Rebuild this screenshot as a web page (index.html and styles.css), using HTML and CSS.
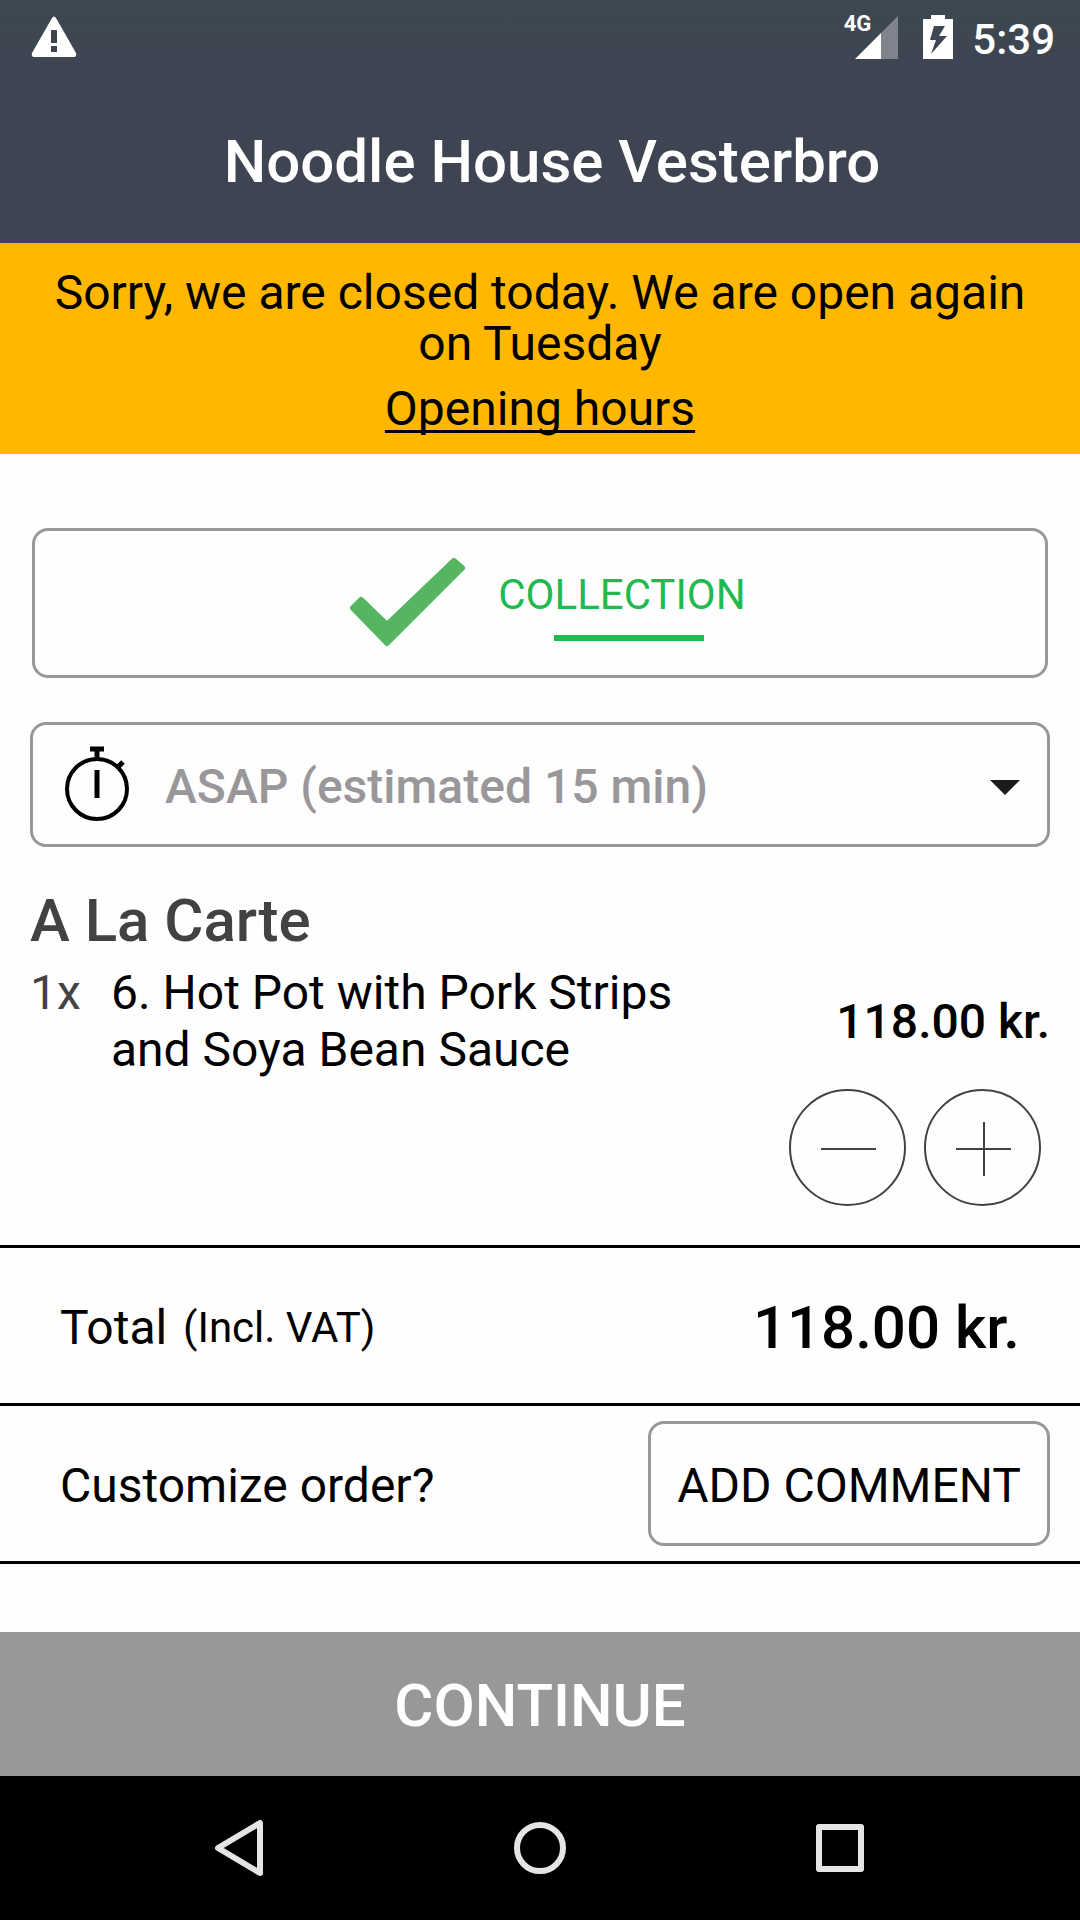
FILE: index.html
```
<!DOCTYPE html>
<html lang="en">
<head>
  <meta charset="UTF-8" />
  <meta name="viewport" content="width=device-width, initial-scale=1.0"/>
  <title>Noodle House Vesterbro</title>
  <link rel="stylesheet" href="styles.css">
</head>
<body>
  <div class="statusbar">
    <svg class="warning" width="46" height="42" viewBox="0 0 46 42" aria-hidden="true">
      <path fill="#fff" fill-rule="evenodd" d="M21 2q2-3 4 0L45 37q1 4-2 4H3q-3 0-2-4zM20 14v13h6V14zM20 30v6h6v-6z"/>
    </svg>
    <div class="status-right">
      <span class="network">4G</span>
      <svg class="signal" width="43" height="43" viewBox="0 0 43 43" aria-hidden="true">
        <path fill="#fff" d="M0 43L26 17V43z"/>
        <path fill="#7f838d" d="M26 17L43 0V43H26z"/>
      </svg>
      <svg class="battery" width="30" height="44" viewBox="0 0 30 44" aria-hidden="true">
        <path fill="#fff" fill-rule="evenodd" d="M8 0H22V4H30V44H0V4H8zM11 11L7 25H13L8 39L24 21H16L22 11z"/>
      </svg>
      <span class="clock">5:39</span>
    </div>
  </div>
  <header>
    <h1>Noodle House Vesterbro</h1>
  </header>
  <div class="notice">
    <p>Sorry, we are closed today. We are open again on Tuesday</p>
    <a href="#">Opening hours</a>
  </div>
  <main>
    <button class="collection" type="button">
      <svg width="145" height="90" viewBox="0 0 145 90" aria-hidden="true">
        <path fill="#56b560" stroke="#56b560" stroke-width="6" stroke-linejoin="round" d="M33 50L41 42L67 67L134 3L142 10L67 85z"/>
      </svg>
      <span class="tab">COLLECTION</span>
    </button>
    <label class="time-box">
      <svg width="66" height="78" viewBox="0 0 66 78" fill="none" stroke="#000" aria-label="Pickup time">
        <circle cx="32" cy="43" r="30" stroke-width="4"/>
        <path stroke-width="5" d="M25 3H39M32 3V13M32 24V52M53 21L58 16"/>
      </svg>
      <select>
        <option>ASAP (estimated 15 min)</option>
      </select>
      <svg width="30" height="22" viewBox="0 0 30 22" aria-hidden="true">
        <path fill="#1c1a1c" d="M0 6H30L15 21z"/>
      </svg>
    </label>
    <h2>A La Carte</h2>
    <div class="item">
      <span class="qty">1x</span>
      <span class="name">6. Hot Pot with Pork Strips and Soya Bean Sauce</span>
      <span class="price">118.00 kr.</span>
    </div>
    <div class="amount">
      <button type="button" aria-label="Remove one">
        <svg width="56" height="56" viewBox="0 0 56 56"><path d="M1 29H56"/></svg>
      </button>
      <button type="button" aria-label="Add one">
        <svg width="56" height="56" viewBox="0 0 56 56"><path d="M1 29H56M29 2V56"/></svg>
      </button>
    </div>
  </main>
  <div class="row">
    <span class="row-label">Total <small>(Incl. VAT)</small></span>
    <span class="total">118.00 kr.</span>
  </div>
  <div class="row row-comment">
    <span class="row-label">Customize order?</span>
    <button class="comment" type="button">ADD COMMENT</button>
  </div>
  <footer>
    <button class="continue" type="button">CONTINUE</button>
    <nav>
      <a href="#" aria-label="Back">
        <svg width="60" height="60" viewBox="0 0 60 60"><path d="M8 30L50 5V55z"/></svg>
      </a>
      <a href="#" aria-label="Home">
        <svg width="60" height="60" viewBox="0 0 60 60"><circle cx="30" cy="30" r="23"/></svg>
      </a>
      <a href="#" aria-label="Recent apps">
        <svg width="60" height="60" viewBox="0 0 60 60"><path d="M9 9H51V51H9z"/></svg>
      </a>
    </nav>
  </footer>
</body>
</html>
```
FILE: styles.css
```
* {
  box-sizing: border-box;
}
body {
  margin: 0;
  min-height: 100vh;
  display: flex;
  flex-direction: column;
  font-family: Roboto, sans-serif;
  font-size: 48px;
  color: #000;
  background-color: #fefefe;
}
button, select {
  font-family: inherit;
  font-size: 48px;
  color: inherit;
  background: none;
  border: none;
  padding: 0;
}
h1, h2, p {
  margin: 0;
}
svg {
  display: block;
  flex-shrink: 0;
}
.statusbar {
  display: flex;
  justify-content: space-between;
  align-items: center;
  height: 72px;
  padding: 2px 25px 0 31px;
  background: linear-gradient(#3c4850, #3f4453);
  color: #fff;
}
.status-right {
  display: flex;
  align-items: center;
}
.network {
  align-self: flex-start;
  margin-right: -16px;
  font-size: 22px;
  line-height: 26px;
  font-weight: 700;
}
.battery {
  margin: 0 19px 0 25px;
}
.clock {
  padding-top: 5px;
  font-size: 42px;
  line-height: 48px;
  font-weight: 500;
}
header {
  padding: 54px 24px 45px 48px;
  background: #3f4453;
  color: #fff;
  text-align: center;
}
h1, h2 {
  font-size: 60px;
  line-height: 72px;
  font-weight: 500;
}
.notice {
  padding: 24px 30px 20px;
  background: #ffb700;
  text-align: center;
  line-height: 51px;
}
.notice a {
  display: inline-block;
  margin-top: 14px;
  color: #000;
  text-decoration-thickness: 3px;
  text-underline-offset: 5px;
  text-decoration-skip-ink: none;
}
main {
  padding: 74px 30px 39px;
}
.collection {
  display: flex;
  justify-content: center;
  align-items: center;
  gap: 33px;
  width: calc(100% - 4px);
  height: 150px;
  margin: 0 2px;
  border: 3px solid #999799;
  border-radius: 16px;
  color: #20ba50;
}
.tab {
  padding: 6px 14px 0 0;
  font-size: 42px;
  line-height: 48px;
}
.tab::after {
  content: "";
  display: block;
  width: 150px;
  height: 6px;
  margin: 16px 0 0 56px;
  background: #20ba50;
}
.time-box {
  display: flex;
  align-items: center;
  height: 125px;
  margin-top: 44px;
  padding: 0 27px 0 32px;
  border: 3px solid #999799;
  border-radius: 16px;
}
.time-box select {
  flex: 1;
  margin-left: 34px;
  padding-top: 4px;
  appearance: none;
  font-weight: 500;
  color: #999799;
}
h2 {
  margin-top: 38px;
  color: #444143;
}
.item {
  display: flex;
  align-items: center;
  margin-top: 7px;
  line-height: 57px;
}
.qty {
  align-self: flex-start;
  width: 81px;
  color: #444143;
}
.name {
  width: 600px;
}
.price {
  margin-left: auto;
  font-weight: 500;
}
.amount {
  display: flex;
  justify-content: flex-end;
  gap: 18px;
  margin-top: 11px;
  padding-right: 9px;
}
.amount button {
  display: flex;
  align-items: center;
  justify-content: center;
  width: 117px;
  height: 117px;
  border: 2px solid #444143;
  border-radius: 50%;
}
.amount path {
  stroke: #444143;
  stroke-width: 2;
}
.row {
  display: flex;
  align-items: center;
  justify-content: space-between;
  height: 158px;
  padding: 0 60px;
  border-top: 3px solid #000;
}
.row-label, .total {
  padding-top: 4px;
}
.row small {
  margin-left: 4px;
  font-size: 42px;
  vertical-align: 2px;
}
.total {
  font-size: 60px;
  font-weight: 500;
}
.row-comment {
  height: 161px;
  padding-right: 30px;
  border-bottom: 3px solid #000;
}
.comment {
  height: 125px;
  padding: 4px 26px 0;
  border: 3px solid #999799;
  border-radius: 16px;
}
footer {
  margin-top: auto;
}
.continue {
  display: block;
  width: 100%;
  height: 144px;
  padding-top: 2px;
  background: #999799;
  color: #fff;
  font-size: 60px;
  font-weight: 500;
}
nav {
  display: flex;
  justify-content: center;
  gap: 240px;
  padding: 42px 0;
  background: #000;
}
nav svg {
  fill: none;
  stroke: #e6e4e6;
  stroke-width: 6;
  stroke-linejoin: round;
}
```
